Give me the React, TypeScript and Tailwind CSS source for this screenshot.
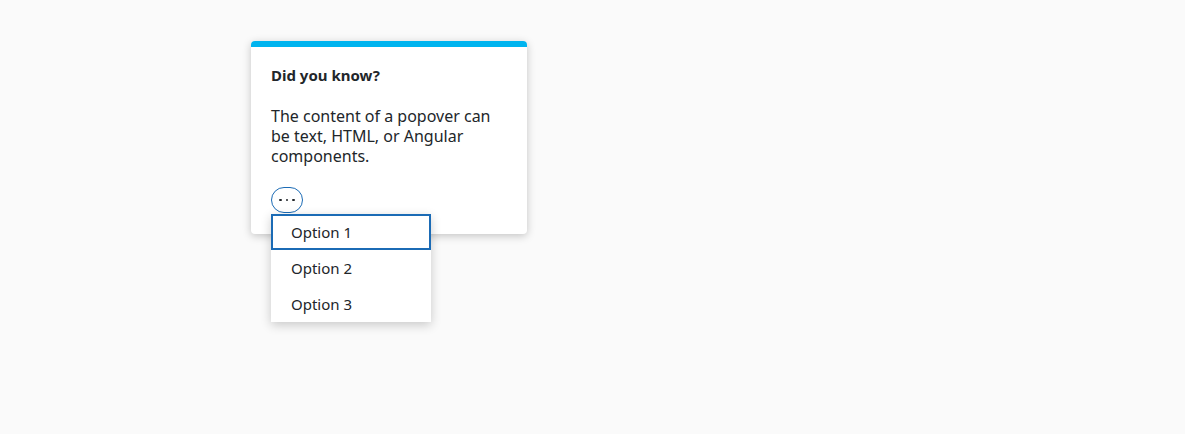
import React from "react";

export default function App() {
  return (
    <div
      className="min-h-[434px] w-full bg-[#fafafa] pl-[251px] pt-[41px]"
      style={{ fontFamily: "'Noto Sans', sans-serif" }}
    >
      <div className="relative w-[276px] rounded-[4px] bg-white shadow-[0_2px_8px_rgba(0,0,0,0.22)]">
        <div className="h-[6px] rounded-t-[4px] bg-[#00b4ef]" />
        <div className="px-5 pt-[18px] pb-[21px] text-[#22262a]">
          <div className="text-[15px] font-bold leading-5">Did you know?</div>
          <p className="mt-[21px] text-[16px] leading-5">
            The content of a popover can be text, HTML, or Angular components.
          </p>
          <button className="mt-[21px] flex h-[26px] w-[32px] items-center justify-center rounded-full border border-[#1b6bb5] bg-white">
            <span className="flex gap-[4px]">
              <span className="h-[2.5px] w-[2.5px] rounded-full bg-[#22262a]" />
              <span className="h-[2.5px] w-[2.5px] rounded-full bg-[#22262a]" />
              <span className="h-[2.5px] w-[2.5px] rounded-full bg-[#22262a]" />
            </span>
          </button>
        </div>
        <div className="absolute left-5 top-[173px] w-[160px] bg-white shadow-[0_3px_10px_rgba(0,0,0,0.2)] text-[15px] text-[#22262a]">
          <div className="flex h-9 items-center border-2 border-[#1b6bb5] pl-[18px]">Option 1</div>
          <div className="flex h-9 items-center pl-5">Option 2</div>
          <div className="flex h-9 items-center pl-5">Option 3</div>
        </div>
      </div>
    </div>
  );
}
